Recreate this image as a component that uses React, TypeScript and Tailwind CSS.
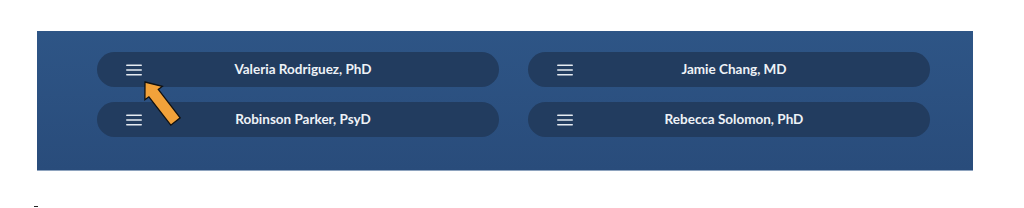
import React from "react";

const names = [
  "Valeria Rodriguez, PhD",
  "Jamie Chang, MD",
  "Robinson Parker, PsyD",
  "Rebecca Solomon, PhD",
];

function Burger() {
  return (
    <svg width="16" height="12" viewBox="0 0 16 12" className="shrink-0">
      <rect x="0" y="0.5" width="16" height="1.6" rx="0.8" fill="#e6ebf2" />
      <rect x="0" y="5.2" width="16" height="1.6" rx="0.8" fill="#e6ebf2" />
      <rect x="0" y="9.9" width="16" height="1.6" rx="0.8" fill="#e6ebf2" />
    </svg>
  );
}

export default function App() {
  return (
    <div className="relative h-[208px] w-[1024px] bg-white overflow-hidden" style={{ fontFamily: "Lato, 'Open Sans', sans-serif" }}>
      <div className="ml-[37px] mt-[31px] w-[936px] h-[140px] bg-gradient-to-b from-[#2e5586] to-[#294c7b] border-b border-[#8ea3be]">
        <div className="grid grid-cols-2 gap-x-[29px] gap-y-[15px] pl-[60px] pr-[43px] pt-[21px]">
          {names.map((n) => (
            <div key={n} className="flex items-center h-[35px] rounded-full bg-[#223c5f] pl-[29px] pr-[35px]">
              <Burger />
              <span className="flex-1 text-center text-[13.5px] font-bold text-[#eef2f7] leading-none">{n}</span>
            </div>
          ))}
        </div>
      </div>
      <div className="ml-[34px] mt-[35px] w-[4px] h-[1px] bg-[#222]" />
      <svg className="pointer-events-none absolute left-0 top-0" width="1024" height="208" viewBox="0 0 1024 208">
        <polygon
          points="145,82 162.3,86.4 158.3,89.4 180.2,117.8 170.8,125.2 148.9,96.8 144.9,99.8"
          fill="#f2a23a"
          stroke="#111"
          strokeWidth="1.3"
          strokeLinejoin="miter"
        />
      </svg>
    </div>
  );
}
